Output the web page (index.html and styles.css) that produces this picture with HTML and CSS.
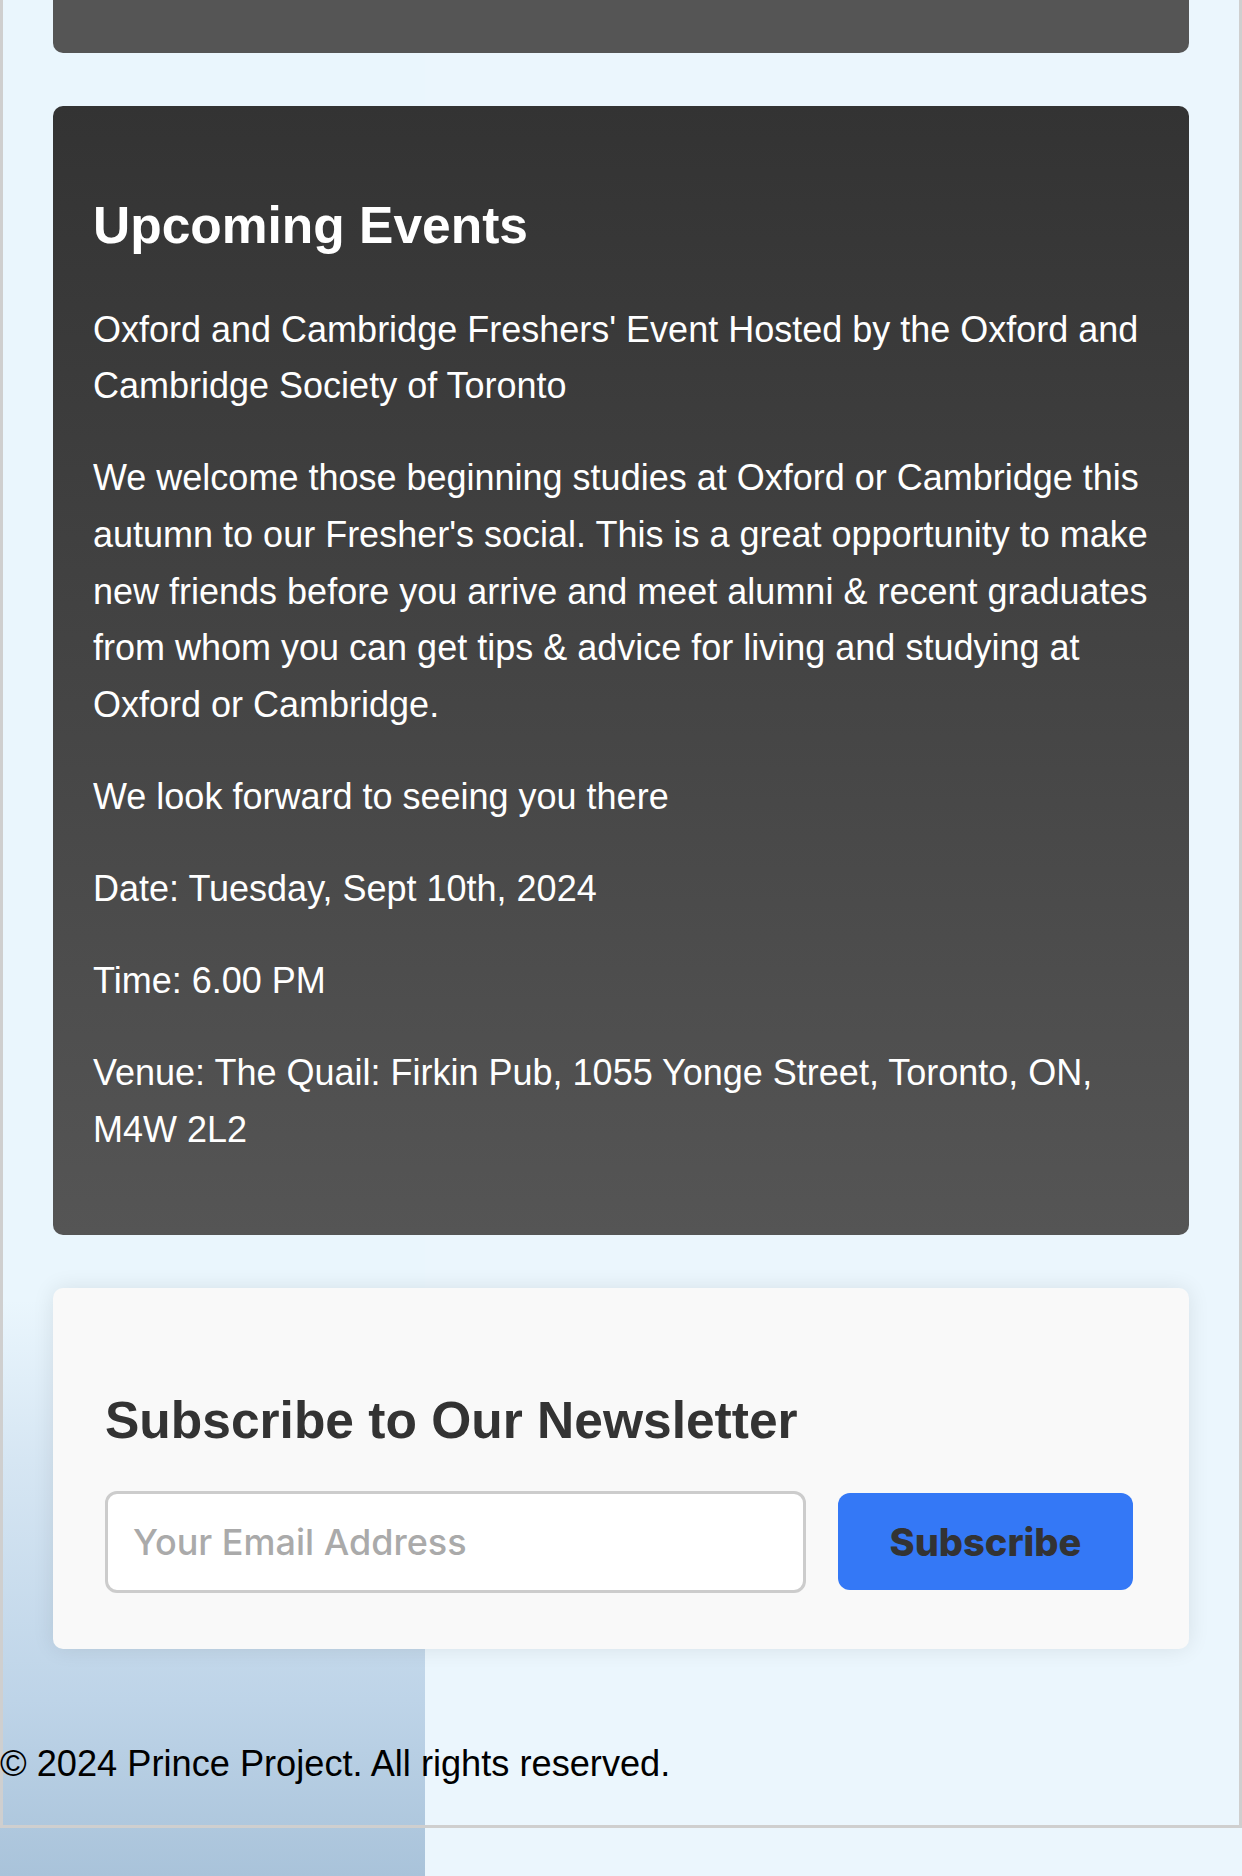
FILE: index.html
```html
<!DOCTYPE html>
<html lang="en">
<head>
	<meta charset="UTF-8">
	<title>Prince Project</title>
	<link rel="stylesheet" href="styles.css">
</head>
<body>
<div class="page">

  <div class="section section-prev"></div>

  <div class="section events">
    <h2>Upcoming Events</h2>
    <p>Oxford and Cambridge Freshers' Event Hosted by the Oxford and Cambridge Society of Toronto</p>
    <p>We welcome those beginning studies at Oxford or Cambridge this autumn to our Fresher's social. This is a great opportunity to make new friends before you arrive and meet alumni &amp; recent graduates from whom you can get tips &amp; advice for living and studying at Oxford or Cambridge.</p>
    <p>We look forward to seeing you there</p>
    <p>Date: Tuesday, Sept 10th, 2024</p>
    <p>Time: 6.00 PM</p>
    <p>Venue: The Quail: Firkin Pub, 1055 Yonge Street, Toronto, ON, M4W 2L2</p>
  </div>

  <div class="newsletter">
    <h2>Subscribe to Our Newsletter</h2>
    <form class="subscribe-form" onsubmit="return false">
      <input type="email" placeholder="Your Email Address">
      <button type="submit">Subscribe</button>
    </form>
  </div>

  <div class="footer">
    <p>&copy; 2024 Prince Project. All rights reserved.</p>
  </div>

</div>
</body>
</html>
```

FILE: styles.css
```css
html {
	background:
		linear-gradient(to bottom, #eaf6fd 0, #eaf6fd 1300px, #d6e6f3 1460px, #bed4e8 1700px, #a9c3da 1876px) 0 0 / 425px 1876px no-repeat,
		#ebf6fd;
}
body { margin:0; padding:0; font-family: "Liberation Sans", Arial, Helvetica, sans-serif; color:#000; }
h2, p { margin:0; }

.page {
	border: 3px solid #cfcfcf;
	border-top: none;
}

/* dark info cards */
.section {
	margin: 0 50px 53px;
	border-radius: 10px;
	background: linear-gradient(to bottom, #333333, #555555);
	color: #fff;
}
.section-prev {
	height: 53px;
	border-radius: 0 0 10px 10px;
	background: #555;
}
.events {
	padding: 40px 20px 41px 40px;
}
.events h2 {
	font-size: 51.5px;
	font-weight: bold;
	line-height: 1.2;
	margin: 49px 0 45px;
}
.events p {
	font-size: 36px;
	line-height: 56.6px;
	margin: 35.5px 0;
}

/* newsletter */
.newsletter {
	margin: 0 50px;
	padding: 0 56px 56px 52px;
	background: #f9f9f9;
	border-radius: 10px;
	box-shadow: 0 0 22px rgba(0, 0, 0, 0.09);
}
.newsletter h2 {
	font-size: 51.5px;
	font-weight: bold;
	line-height: 1.2;
	color: #333;
	margin: 0;
	padding: 102px 0 39px;
}
.subscribe-form {
	display: flex;
	align-items: center;
	gap: 32px;
}
.subscribe-form input {
	flex: 1;
	min-width: 0;
	height: 102px;
	box-sizing: border-box;
	padding: 0 25px;
	border: 3px solid #cccccc;
	border-radius: 12px;
	background: #fff;
	font-family: Inter, "Noto Sans", sans-serif;
	font-size: 36px;
	font-weight: 500;
	color: #333;
	outline: none;
}
.subscribe-form input::placeholder { color: #aaaaaa; }
.subscribe-form button {
	width: 295px;
	height: 97px;
	border: none;
	border-radius: 12px;
	background: #3478f6;
	color: #333;
	font-family: Inter, "Noto Sans", sans-serif;
	font-size: 38px;
	font-weight: 800;
	cursor: pointer;
}

/* footer */
.footer {
	padding: 93px 0 40px;
}
.footer p {
	margin-left: -3px;
	font-size: 36.2px;
	line-height: 1.2;
	color: #000;
}
```
